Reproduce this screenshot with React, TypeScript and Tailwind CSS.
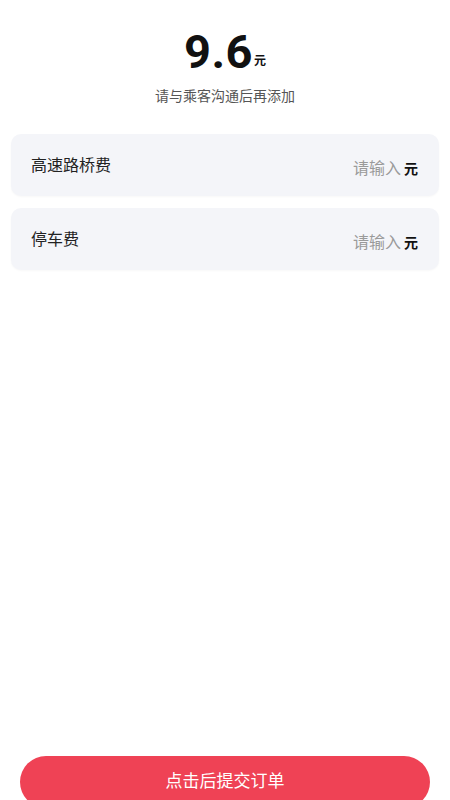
const fees = ["高速路桥费", "停车费"];

export default function App() {
  return (
    <div
      className="relative h-[800px] w-[450px] overflow-hidden bg-white"
      style={{ fontFamily: '"Noto Sans", "Noto Sans CJK SC", sans-serif' }}
    >
      {/* Amount */}
      <div className="flex flex-col items-center pt-[24px]">
        <div className="flex items-baseline">
          <span
            className="text-[47px] font-bold leading-[56px] tracking-[0.5px] text-[#111]"
            style={{ fontFamily: 'Roboto, "Noto Sans CJK SC", sans-serif' }}
          >
            9.6
          </span>
          <span className="relative -top-[3px] ml-[1px] text-[12px] font-bold text-[#111]">元</span>
        </div>
        <p className="mt-[6px] text-[14px] leading-[20px] text-[#555]">请与乘客沟通后再添加</p>
      </div>

      {/* Fee rows */}
      <div className="mt-[28px] flex flex-col gap-[12px] px-[11px]">
        {fees.map((name) => (
          <div
            key={name}
            className="flex h-[62px] items-center justify-between rounded-[10px] bg-[#f4f5f9] pl-[20px] pr-[21px] shadow-[0_1px_2px_rgba(0,0,0,0.03)]"
          >
            <span className="text-[16px] text-[#222]">{name}</span>
            <span className="mt-[6px] flex items-center">
              <span className="text-[16px] text-[#9a9a9a]">请输入</span>
              <span className="ml-[3px] text-[14px] font-bold text-[#111]">元</span>
            </span>
          </div>
        ))}
      </div>

      {/* Submit */}
      <button className="absolute left-[20px] top-[756px] h-[52px] w-[410px] rounded-full bg-[#ef4255] text-[17px] text-white">
        <span className="relative -top-[1px]">点击后提交订单</span>
      </button>
    </div>
  );
}
